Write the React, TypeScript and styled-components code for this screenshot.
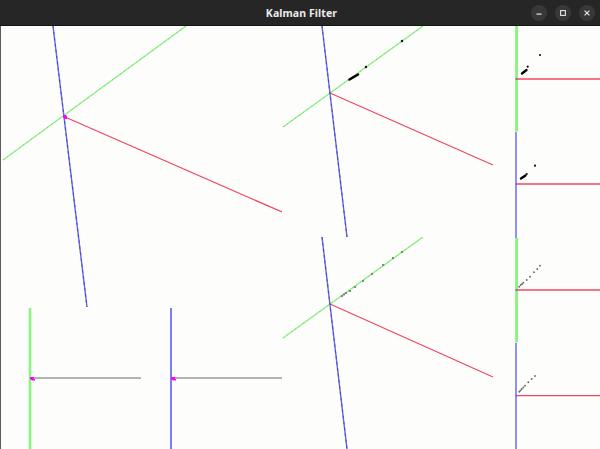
import React from "react";
import styled, { createGlobalStyle } from "styled-components";

const GlobalStyle = createGlobalStyle`
  html, body {
    margin: 0;
    padding: 0;
    background: #1e1e1e;
    overflow: hidden;
  }
  #root {
    width: 600px;
    height: 449px;
  }
`;

const Window = styled.div`
  width: 600px;
  height: 449px;
  display: flex;
  flex-direction: column;
  background: #fdfdfc;
  overflow: hidden;
`;

const TitleBar = styled.div`
  height: 26px;
  flex: 0 0 26px;
  box-sizing: border-box;
  background: #262626;
  border-bottom: 1px solid #141414;
  display: grid;
  grid-template-columns: 1fr auto 1fr;
  align-items: center;
  padding: 0 5px 0 8px;
`;

const Title = styled.div`
  grid-column: 2;
  font-family: "Noto Sans", "DejaVu Sans", sans-serif;
  font-weight: 700;
  font-size: 10.5px;
  color: #ececec;
  letter-spacing: 0.1px;
  padding-top: 1px;
`;

const Controls = styled.div`
  grid-column: 3;
  justify-self: end;
  display: flex;
  gap: 8px;
  align-items: center;
  padding-top: 1px;
`;

const ControlButton = styled.div`
  width: 16px;
  height: 16px;
  border-radius: 50%;
  background: #383838;
  display: flex;
  align-items: center;
  justify-content: center;
`;

const Canvas = styled.div`
  flex: 1;
  display: grid;
  grid-template-columns: 282px 233px 85px;
  grid-template-rows: 423px;
  background: #fdfdfc;
  box-shadow: inset 1px 0 0 #5c5c5c;
`;

const Column = styled.div`
  display: flex;
  flex-direction: column;
  min-width: 0;
`;

const PanelRow = styled.div`
  display: flex;
`;

const Panel = styled.svg<{ $w: number; $h: number }>`
  display: block;
  width: ${(p) => p.$w}px;
  height: ${(p) => p.$h}px;
  flex: 0 0 auto;
  overflow: hidden;
`;

type Pt = [number, number];

const BlueAxis = ({ a, b }: { a: Pt; b: Pt }) => (
  <g>
    <line x1={a[0]} y1={a[1]} x2={b[0]} y2={b[1]} stroke="#6262ff" strokeWidth={1.4} />
    <line
      x1={a[0]}
      y1={a[1]}
      x2={b[0]}
      y2={b[1]}
      stroke="#3a3a3a"
      strokeWidth={1.1}
      strokeDasharray="2.5 3.5"
      opacity={0.55}
    />
  </g>
);

const GreenAxis = ({ a, b }: { a: Pt; b: Pt }) => (
  <g>
    <line x1={a[0]} y1={a[1]} x2={b[0]} y2={b[1]} stroke="#8ef283" strokeWidth={1.4} />
    <line
      x1={a[0]}
      y1={a[1]}
      x2={b[0]}
      y2={b[1]}
      stroke="#6f8f6c"
      strokeWidth={1}
      strokeDasharray="1 4"
      opacity={0.45}
    />
  </g>
);

const RedAxis = ({ a, b }: { a: Pt; b: Pt }) => (
  <line x1={a[0]} y1={a[1]} x2={b[0]} y2={b[1]} stroke="#ee4762" strokeWidth={1.2} />
);

const GrayAxis = ({ a, b }: { a: Pt; b: Pt }) => (
  <line x1={a[0]} y1={a[1]} x2={b[0]} y2={b[1]} stroke="#6a6a6a" strokeWidth={1.2} />
);

const Dots = ({ pts, color, r }: { pts: Pt[]; color: string; r: number }) => (
  <g fill={color}>
    {pts.map((p, i) => (
      <circle key={i} cx={p[0]} cy={p[1]} r={r} />
    ))}
  </g>
);

const Marker = ({ x, y }: { x: number; y: number }) => (
  <path d={`M${x} ${y} h3 l1 1.5 v2.5 h-2 l-2 -2 z`} fill="#ff00ff" />
);

const FlatMarker = ({ x, y }: { x: number; y: number }) => (
  <path d={`M${x} ${y - 1} h4 v2 h1 v1.5 h-3 l-2 -1.5 z`} fill="#ff00ff" />
);

const SidePanel = ({
  h,
  axis,
  redY,
  children,
}: {
  h: number;
  axis: "green" | "blue";
  redY: number;
  children?: React.ReactNode;
}) => (
  <Panel $w={85} $h={h} viewBox={`0 0 85 ${h}`}>
    {axis === "green" ? (
      <line x1={1.6} y1={0} x2={1.6} y2={h - 0.5} stroke="#8ef283" strokeWidth={3} />
    ) : (
      <line x1={1} y1={0} x2={1} y2={h} stroke="#6a6aff" strokeWidth={1.5} />
    )}
    <line x1={1} y1={redY} x2={85} y2={redY} stroke="#ee4762" strokeWidth={1.3} />
    <rect x={0.5} y={redY - 0.8} width={1.5} height={1.6} fill="#a040ff" />
    {children}
  </Panel>
);

export default function App() {
  return (
    <>
      <GlobalStyle />
      <Window>
        <TitleBar>
          <Title>Kalman Filter</Title>
          <Controls>
            <ControlButton>
              <svg width="8" height="8" viewBox="0 0 8 8">
                <rect x="1.5" y="4.5" width="5" height="1.2" fill="#e6e6e6" />
              </svg>
            </ControlButton>
            <ControlButton>
              <svg width="8" height="8" viewBox="0 0 8 8">
                <rect x="1.6" y="1.6" width="4.8" height="4.8" fill="none" stroke="#e6e6e6" strokeWidth="1.1" />
              </svg>
            </ControlButton>
            <ControlButton>
              <svg width="8" height="8" viewBox="0 0 8 8">
                <path d="M1.6 1.6 L6.4 6.4 M6.4 1.6 L1.6 6.4" stroke="#e6e6e6" strokeWidth="1.2" />
              </svg>
            </ControlButton>
          </Controls>
        </TitleBar>
        <Canvas>
          <Column>
            <Panel $w={282} $h={281} viewBox="0 0 282 281">
              <GreenAxis a={[3, 134]} b={[186, 0]} />
              <RedAxis a={[65, 91]} b={[282, 186]} />
              <BlueAxis a={[53, 0]} b={[87, 281]} />
              <Marker x={63} y={89} />
            </Panel>
            <PanelRow>
              <Panel $w={141} $h={142} viewBox="0 0 141 142">
                <line x1={30} y1={1} x2={30} y2={142} stroke="#8ef283" strokeWidth={2.6} />
                <GrayAxis a={[30, 71]} b={[141, 71]} />
                <FlatMarker x={30} y={71} />
              </Panel>
              <Panel $w={141} $h={142} viewBox="0 0 141 142">
                <line x1={30} y1={1} x2={30} y2={142} stroke="#5b5bff" strokeWidth={1.6} />
                <GrayAxis a={[30, 71]} b={[141, 71]} />
                <FlatMarker x={30} y={71} />
              </Panel>
            </PanelRow>
          </Column>
          <Column>
            <Panel $w={233} $h={211} viewBox="0 0 233 211">
              <GreenAxis a={[1, 101]} b={[141, 0]} />
              <RedAxis a={[48, 67]} b={[211, 139]} />
              <BlueAxis a={[40, 0]} b={[65, 211]} />
              <line x1={67.5} y1={53.5} x2={76} y2={48.5} stroke="#000" strokeWidth={2.6} strokeLinecap="round" />
              <Dots pts={[[84, 41], [120, 15]]} color="#111" r={1.2} />
            </Panel>
            <Panel $w={233} $h={212} viewBox="0 0 233 212">
              <GreenAxis a={[1, 101]} b={[141, 0]} />
              <RedAxis a={[48, 67]} b={[211, 140]} />
              <BlueAxis a={[40, 0]} b={[65, 212]} />
              <Dots
                pts={[
                  [60, 59],
                  [62, 57.5],
                  [64, 56],
                  [68, 54],
                  [73, 50],
                  [81, 44],
                  [90, 37],
                  [101, 28],
                  [111, 21],
                  [120, 15],
                ]}
                color="#707070"
                r={1.1}
              />
            </Panel>
          </Column>
          <Column>
            <SidePanel h={106} axis="green" redY={53}>
              <line x1={7} y1={47.5} x2={11.5} y2={44} stroke="#000" strokeWidth={2.4} strokeLinecap="round" />
              <Dots pts={[[12.7, 40.7], [25, 29]]} color="#111" r={1.1} />
            </SidePanel>
            <SidePanel h={106} axis="blue" redY={52}>
              <line x1={6} y1={46.5} x2={10.5} y2={43.5} stroke="#000" strokeWidth={2.4} strokeLinecap="round" />
              <Dots pts={[[11.7, 42], [20, 33.7]]} color="#111" r={1.1} />
            </SidePanel>
            <SidePanel h={105} axis="green" redY={52}>
              <Dots
                pts={[
                  [4.3, 48.7],
                  [5.7, 47],
                  [7, 46],
                  [8.3, 44.7],
                  [11.7, 42],
                  [15, 38.7],
                  [19, 34.3],
                  [22.3, 31],
                  [25, 27.7],
                ]}
                color="#6a6a6a"
                r={0.95}
              />
            </SidePanel>
            <SidePanel h={106} axis="blue" redY={52.7}>
              <Dots
                pts={[
                  [4.3, 48.7],
                  [5.5, 47.5],
                  [6.7, 46],
                  [8.3, 44.5],
                  [10, 42.7],
                  [13.3, 39.3],
                  [16.7, 36],
                  [20, 33],
                ]}
                color="#6a6a6a"
                r={0.95}
              />
            </SidePanel>
          </Column>
        </Canvas>
      </Window>
    </>
  );
}
